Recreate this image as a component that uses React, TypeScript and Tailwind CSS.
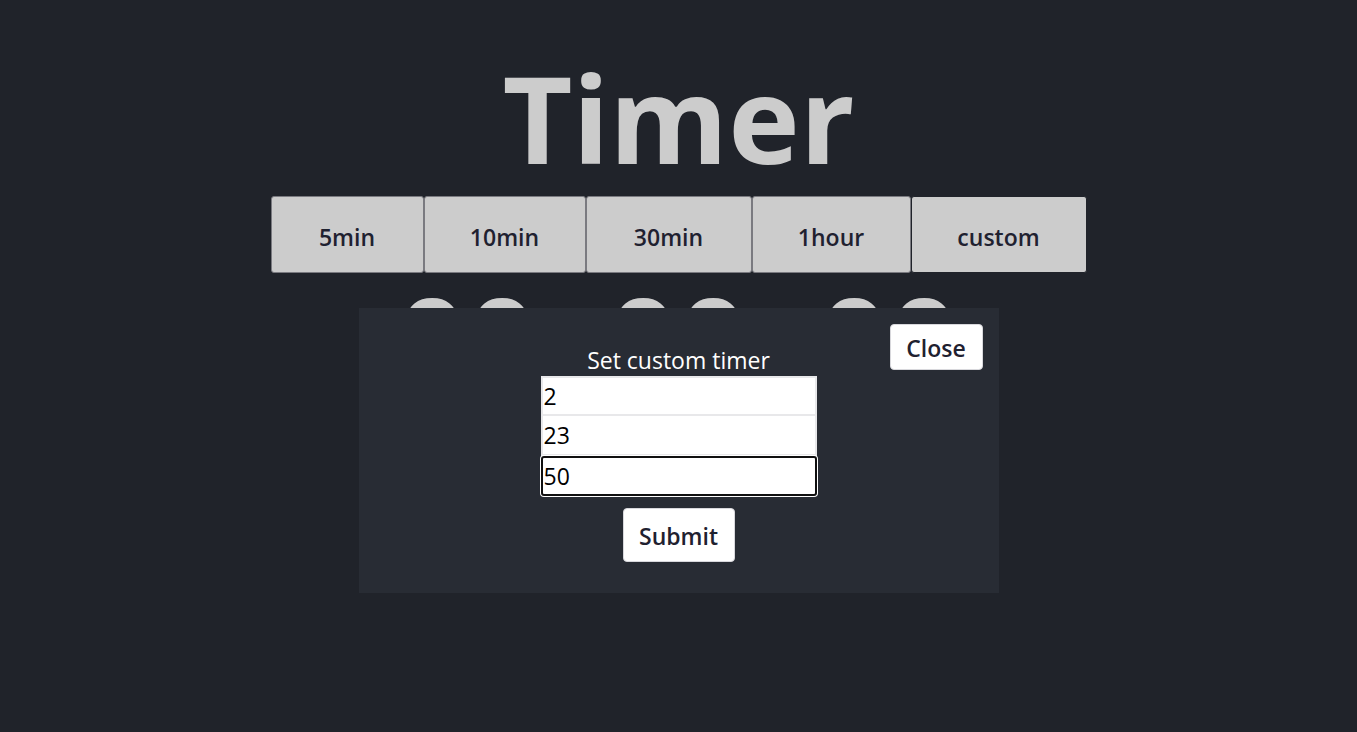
import { useState } from "react";

const presets = [
  { label: "5min", w: "w-[153px]" },
  { label: "10min", w: "w-[162px]" },
  { label: "30min", w: "w-[166px]" },
  { label: "1hour", w: "w-[159px]" },
];

export default function App() {
  const [hours, setHours] = useState("2");
  const [minutes, setMinutes] = useState("23");
  const [seconds, setSeconds] = useState("50");

  return (
    <div className="relative min-h-screen w-full overflow-hidden bg-[#20232a] font-['Open_Sans',sans-serif]">
      <div className="flex flex-col items-center pt-[57px]">
        <h1 className="text-[121px] font-bold leading-none text-[#cccccc]">Timer</h1>

        <div className="mt-[18px] flex">
          {presets.map((p) => (
            <button
              key={p.label}
              className={`${p.w} h-[77px] rounded-[3px] border border-[#7a7a80] bg-[#cccccc] pt-[5px] text-[23px] font-semibold text-[#1f2130]`}
            >
              {p.label}
            </button>
          ))}
          <button className="h-[77px] w-[176px] rounded-[3px] border border-[#20232a] bg-[#cccccc] pt-[5px] text-[23px] font-semibold text-[#1f2130]">
            custom
          </button>
        </div>

        <div className="mt-[6px] flex text-[122px] font-bold leading-none text-[#cccccc]">
          <span className="w-[70px] text-center">0</span>
          <span className="w-[70px] text-center">0</span>
          <span className="w-[71px] text-center">:</span>
          <span className="w-[70px] text-center">0</span>
          <span className="w-[70px] text-center">0</span>
          <span className="w-[71px] text-center">:</span>
          <span className="w-[70px] text-center">0</span>
          <span className="w-[70px] text-center">0</span>
        </div>
      </div>

      <div className="absolute left-1/2 top-[308px] ml-[-320px] flex h-[285px] w-[640px] flex-col items-center bg-[#282c34] pt-[36px]">
        <button className="absolute right-4 top-4 h-[46px] w-[93px] rounded-[4px] border border-[#d8d8dc] bg-white pt-[2px] text-[23px] font-semibold text-[#1f2130]">
          Close
        </button>

        <p className="text-[23px] leading-[32px] text-white">Set custom timer</p>

        <div className="flex flex-col">
          <input
            value={hours}
            onChange={(e) => setHours(e.target.value)}
            className="h-[40px] w-[276px] border-2 border-[#e8e8ea] bg-white px-px text-[23px] text-black outline-none"
          />
          <input
            value={minutes}
            onChange={(e) => setMinutes(e.target.value)}
            className="h-[40px] w-[276px] border-2 border-t-0 border-[#e8e8ea] bg-white px-px text-[23px] text-black outline-none"
          />
          <input
            value={seconds}
            onChange={(e) => setSeconds(e.target.value)}
            className="h-[40px] w-[276px] rounded-[3px] border-2 border-[#101010] bg-white px-px text-[23px] text-black outline-none ring-1 ring-white"
          />
        </div>

        <button className="mt-[12px] h-[54px] w-[112px] rounded-[4px] border border-[#d8d8dc] bg-white pt-[2px] text-[23px] font-semibold text-[#1f2130]">
          Submit
        </button>
      </div>
    </div>
  );
}
